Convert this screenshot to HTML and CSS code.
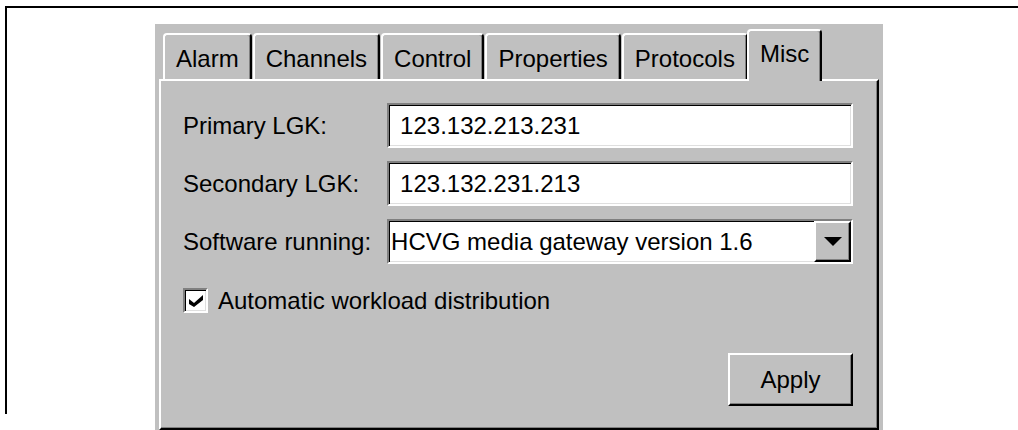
FILE: index.html
```html
<!DOCTYPE html>
<html lang="en">
<head>
<meta charset="utf-8">
<title>Gateway settings</title>
<link rel="stylesheet" href="styles.css">
</head>
<body>
<div class="frame">
  <div class="dialog">
    <div class="tabpane">
      <div class="tabs">
        <div class="tab">Alarm</div>
        <div class="tab">Channels</div>
        <div class="tab">Control</div>
        <div class="tab">Properties</div>
        <div class="tab">Protocols</div>
        <div class="tab tab-selected">Misc</div>
      </div>
      <div class="panel">
        <div class="form">
          <div class="label">Primary LGK:</div>
          <div class="textfield">123.132.213.231</div>
          <div class="label">Secondary LGK:</div>
          <div class="textfield">123.132.231.213</div>
          <div class="label">Software running:</div>
          <div class="combo">
            <div class="combo-value">HCVG media gateway version 1.6</div>
            <div class="combo-button">
              <svg width="18" height="9" viewBox="0 0 18 9"><polygon points="0,0 18,0 9,9" fill="#000"/></svg>
            </div>
          </div>
        </div>
        <div class="check-row">
          <div class="checkbox">
            <svg width="14" height="12" viewBox="0 0 14 12"><path d="M0 4 L5 8 L14 0 L14 5 L5 12 L0 9 Z" fill="#000"/></svg>
          </div>
          <div class="check-label">Automatic workload distribution</div>
        </div>
        <div class="actions">
          <div class="button">Apply</div>
        </div>
      </div>
    </div>
  </div>
</div>
</body>
</html>
```
FILE: styles.css
```css
html, body {
  margin: 0;
  padding: 0;
  overflow: hidden;
  background: #fff;
}

body {
  width: 1018px;
  height: 430px;
  font-family: "Liberation Sans", Arial, sans-serif;
  font-size: 24px;
  color: #000;
}

/* thin black frame around the page area */
.frame {
  margin: 6px 0 0 5px;
  height: 406px;
  border-top: 2px solid #000;
  border-left: 2px solid #000;
}

.dialog {
  box-sizing: border-box;
  margin: 16px 0 0 148px;
  width: 728px;
  height: 406px;
  padding: 5px 0 0 4px;
  background: #c0c0c0;
}

.tabpane {
  width: 720px;
}

/* tab strip */
.tabs {
  display: flex;
  align-items: flex-end;
  height: 50px;
  padding-left: 4px;
}

.tab {
  box-sizing: border-box;
  height: 46px;
  padding: 5px 11px 0;
  margin-right: 1px;
  line-height: 38px;
  white-space: nowrap;
  background: #c0c0c0;
  border-top: 2px solid #fff;
  border-left: 2px solid #fff;
  border-right: 2px solid #000;
  border-radius: 4px 4px 0 0;
  box-shadow: inset -1px 0 #808080;
}

.tab-selected {
  position: relative;
  z-index: 1;
  height: 52px;
  margin: 0 0 -2px -2px;
  padding-top: 4px;
}

/* raised content panel under the tabs */
.panel {
  box-sizing: border-box;
  height: 351px;
  padding: 22px 24px 0 22px;
  border-top: 2px solid #fff;
  border-left: 2px solid #fff;
  border-right: 2px solid #000;
  border-bottom: 2px solid #000;
  box-shadow: inset -1px -1px #808080;
}

.form {
  display: grid;
  grid-template-columns: auto 1fr;
  grid-auto-rows: 45px;
  column-gap: 16px;
  row-gap: 13px;
  align-items: center;
}

.label {
  white-space: nowrap;
}

/* sunken white entry fields */
.textfield,
.combo,
.checkbox {
  box-sizing: border-box;
  background: #fff;
  border: 2px solid;
  border-color: #808080 #fff #fff #808080;
  box-shadow: inset 1px 1px #000, inset -1px -1px #dfdfdf;
}

.textfield {
  height: 45px;
  padding-left: 11px;
  line-height: 41px;
  white-space: nowrap;
}

.combo {
  display: flex;
  height: 45px;
}

.combo-value {
  flex: 1;
  padding-left: 2px;
  line-height: 41px;
  white-space: nowrap;
}

.combo-button {
  box-sizing: border-box;
  width: 37px;
  display: flex;
  align-items: center;
  justify-content: center;
  background: #c0c0c0;
  border: 2px solid;
  border-color: #fff #000 #000 #fff;
  box-shadow: inset -1px -1px #808080;
}

.check-row {
  display: flex;
  align-items: center;
  gap: 10px;
  height: 25px;
  margin-top: 24px;
}

.checkbox {
  width: 25px;
  height: 25px;
  display: flex;
  align-items: center;
  justify-content: center;
}

.check-label {
  white-space: nowrap;
}

.actions {
  display: flex;
  justify-content: flex-end;
  margin-top: 40px;
}

.button {
  box-sizing: border-box;
  width: 125px;
  height: 53px;
  line-height: 49px;
  text-align: center;
  background: #c0c0c0;
  border: 2px solid;
  border-color: #fff #000 #000 #fff;
  box-shadow: inset -1px -1px #808080;
}
```
